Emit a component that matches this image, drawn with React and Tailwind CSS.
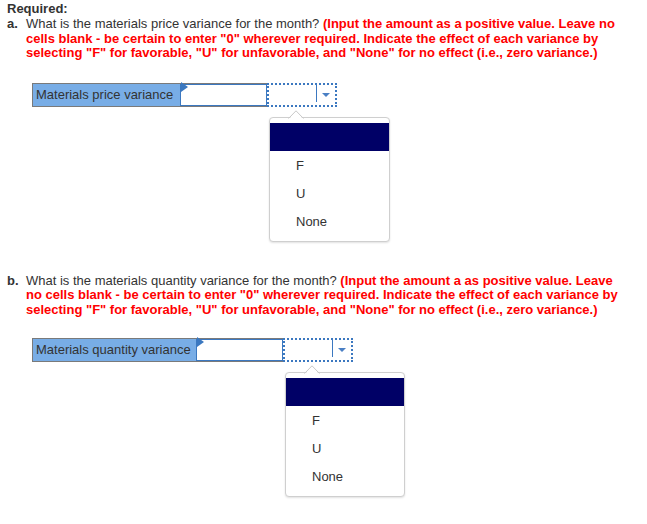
import React from "react";

function Pointer() {
  return (
    <svg
      className="absolute left-[18px] top-[-8px]"
      width="16"
      height="10"
      viewBox="0 0 16 10"
    >
      <path d="M0.5 9.5 L8 1.5 L15.5 9.5 Z" fill="#ffffff" stroke="none" />
      <path d="M0.5 8.5 L8 0.8 L15.5 8.5" fill="none" stroke="#c8c8c8" strokeWidth="1" />
    </svg>
  );
}

function Popup({ ml, w }) {
  return (
    <div
      className={`relative mt-[10px] ${ml} ${w} h-[125px] bg-white border border-[#cfcfcf] rounded-[4px] shadow-[0_1px_2px_rgba(0,0,0,0.12)] pt-[5px] text-[#333]`}
    >
      <Pointer />
      <div className="h-[28px] bg-[#000066]" />
      <div className="h-[28px] flex items-center pt-[2px] pl-[26px]">F</div>
      <div className="h-[28px] flex items-center pt-[2px] pl-[26px]">U</div>
      <div className="h-[28px] flex items-center pt-[2px] pl-[26px]">None</div>
    </div>
  );
}

function Row({ label, labelW }) {
  return (
    <div className="flex h-[24px] ml-[25px]">
      <div className="flex border border-r-0 border-[#7a7a7a]">
        <div className={`${labelW} bg-[#78ade6] pl-[3px] flex items-center text-[#333] whitespace-nowrap`}>
          {label}
        </div>
        <div className="relative w-[87px] h-full border border-[#3b78c0] bg-white">
          <div className="absolute left-0 top-0 w-0 h-0 border-t-[5px] border-t-transparent border-b-[5px] border-b-transparent border-l-[7px] border-l-[#3b78c0] -translate-y-[3px]" />
        </div>
      </div>
      <div className="w-[70px] h-full border-2 border-dotted border-[#3b78c0] flex bg-white">
        <div className="w-[47px]" />
        <div className="w-px h-[17px] bg-[#3b78c0]" />
        <div className="flex-1 flex items-center justify-center">
          <div className="w-0 h-0 border-x-[4px] border-x-transparent border-t-[4px] border-t-[#4a7fc4]" />
        </div>
      </div>
    </div>
  );
}

export default function App() {
  return (
    <div className="pl-[7px] pt-[1px] font-['Liberation_Sans',Arial,sans-serif] text-[13px] text-[#333] bg-white min-h-[524px]">
      <div className="font-bold leading-[15px]">Required:</div>
      <div className="flex leading-[14.5px] whitespace-nowrap pt-[1px]">
        <span className="w-[19px] font-bold">a.</span>
        <div>
          <div>
            What is the materials price variance for the month?{" "}
            <span className="font-bold text-[#ff0000]">
              (Input the amount as a positive value. Leave no
            </span>
          </div>
          <div className="font-bold text-[#ff0000]">
            cells blank - be certain to enter "0" wherever required. Indicate the effect of each variance by
          </div>
          <div className="font-bold text-[#ff0000]">
            selecting "F" for favorable, "U" for unfavorable, and "None" for no effect (i.e., zero variance.)
          </div>
        </div>
      </div>

      <div className="mt-[22px]">
        <Row label="Materials price variance" labelW="w-[147px]" />
        <Popup ml="ml-[262px]" w="w-[121px]" />
      </div>

      <div className="flex leading-[14.5px] whitespace-nowrap mt-[32px]">
        <span className="w-[19px] font-bold">b.</span>
        <div>
          <div>
            What is the materials quantity variance for the month?{" "}
            <span className="font-bold text-[#ff0000]">
              (Input the amount a as positive value. Leave
            </span>
          </div>
          <div className="font-bold text-[#ff0000]">
            no cells blank - be certain to enter "0" wherever required. Indicate the effect of each variance by
          </div>
          <div className="font-bold text-[#ff0000]">
            selecting "F" for favorable, "U" for unfavorable, and "None" for no effect (i.e., zero variance.)
          </div>
        </div>
      </div>

      <div className="mt-[21px]">
        <Row label="Materials quantity variance" labelW="w-[163px]" />
        <Popup ml="ml-[278px]" w="w-[120px]" />
      </div>
    </div>
  );
}
